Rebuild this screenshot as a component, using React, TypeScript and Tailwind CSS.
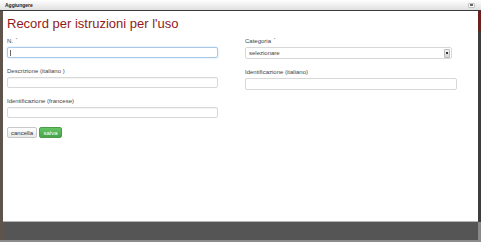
import React from 'react';

const font = { fontFamily: '"Liberation Sans", Arial, sans-serif' };

function Field({ label, req, children }: { label: string; req?: boolean; children: React.ReactNode }) {
  return (
    <div className="flex flex-col gap-[2px] mb-[9px]">
      <label className="text-[6px] leading-[8px] text-[#444] h-[8px] whitespace-nowrap">
        {label}
        {req && <sup className="text-[4px] text-[#555] ml-[1px]">*</sup>}
      </label>
      {children}
    </div>
  );
}

function Input({ w }: { w: string }) {
  return <div className={`${w} h-[11px] border border-[#d8d8d8] rounded-[2px] bg-white shadow-[inset_0_1px_1px_rgba(0,0,0,0.05)]`} />;
}

export default function App() {
  return (
    <div className="w-[481px] h-[242px] bg-[#555] overflow-hidden flex flex-col" style={font}>
      <div className="h-[11px] shrink-0 flex items-center justify-between pl-[5px] pr-[6px] bg-gradient-to-b from-white to-[#e0e0e0] border-b border-[#3a3a3a]">
        <span className="text-[5px] font-bold text-[#222] leading-none">Aggiungere</span>
        <span className="w-[7px] h-[5px] border border-[#c4c4c4] rounded-[1px] bg-[#f7f7f7] flex items-center justify-center">
          <span className="w-[3px] h-[2px] bg-[#666]" />
        </span>
      </div>
      <div className="flex h-[211px] shrink-0">
        <div className="w-[3px] bg-[#5e544c]" />
        <div className="flex-1 bg-white border-b border-[#b5b5b5] pl-[4px] pt-[5px]">
          <h1 className="text-[13px] leading-[15px] text-[#8e1b1b] mb-[6px]">Record per istruzioni per l'uso</h1>
          <div className="flex gap-[27px]">
            <div className="w-[211px]">
              <Field label="N. " req>
                <div className="w-[211px] h-[11px] border border-[#a9c8ea] rounded-[2px] bg-white shadow-[0_0_2px_rgba(82,168,236,0.4)] flex items-center pl-[2px]">
                  <span className="w-px h-[6px] bg-[#666]" />
                </div>
              </Field>
              <Field label="Descrizione (italiano )">
                <Input w="w-[211px]" />
              </Field>
              <Field label="Identificazione (francese)">
                <Input w="w-[211px]" />
              </Field>
              <div className="flex gap-[2px]">
                <button className="w-[30px] h-[11px] text-[6px] leading-none text-[#333] border border-[#c8c8c8] rounded-[2px] bg-gradient-to-b from-white to-[#e8e8e8]">cancella</button>
                <button className="w-[23px] h-[11px] text-[6px] leading-none text-white border border-[#4a9e4a] rounded-[2px] bg-gradient-to-b from-[#62c462] to-[#4aa34a]">salva</button>
              </div>
            </div>
            <div className="w-[212px]">
              <Field label="Categoria " req>
                <div className="w-[207px] h-[12px] border border-[#d8d8d8] rounded-[2px] bg-white flex items-center justify-between pl-[3px] pr-[1px]">
                  <span className="text-[6px] leading-none text-[#444]">selezionare</span>
                  <span className="w-[6px] h-[9px] rounded-[1px] bg-gradient-to-b from-[#f4f4f4] to-[#d4d4d4] border border-[#bbb] flex items-center justify-center">
                    <span className="w-[2px] h-[2px] bg-[#333]" />
                  </span>
                </div>
              </Field>
              <Field label="Identificazione (italiano)">
                <div className="w-[212px] h-[12px] border border-[#d8d8d8] rounded-[2px] bg-white" />
              </Field>
            </div>
          </div>
        </div>
        <div className="w-[3px] bg-[#3d3d3d] flex flex-col">
          <div className="h-[20px] bg-[#6b2020]" />
        </div>
      </div>
      <div className="flex-1 flex">
        <div className="w-[3px] bg-[#5e544c]" />
        <div className="flex-1 bg-[#555]" />
        <div className="w-[3px] bg-[#8a8a8a]" />
      </div>
      <div className="h-[2px] shrink-0 bg-[#8c8c8c]" />
    </div>
  );
}
